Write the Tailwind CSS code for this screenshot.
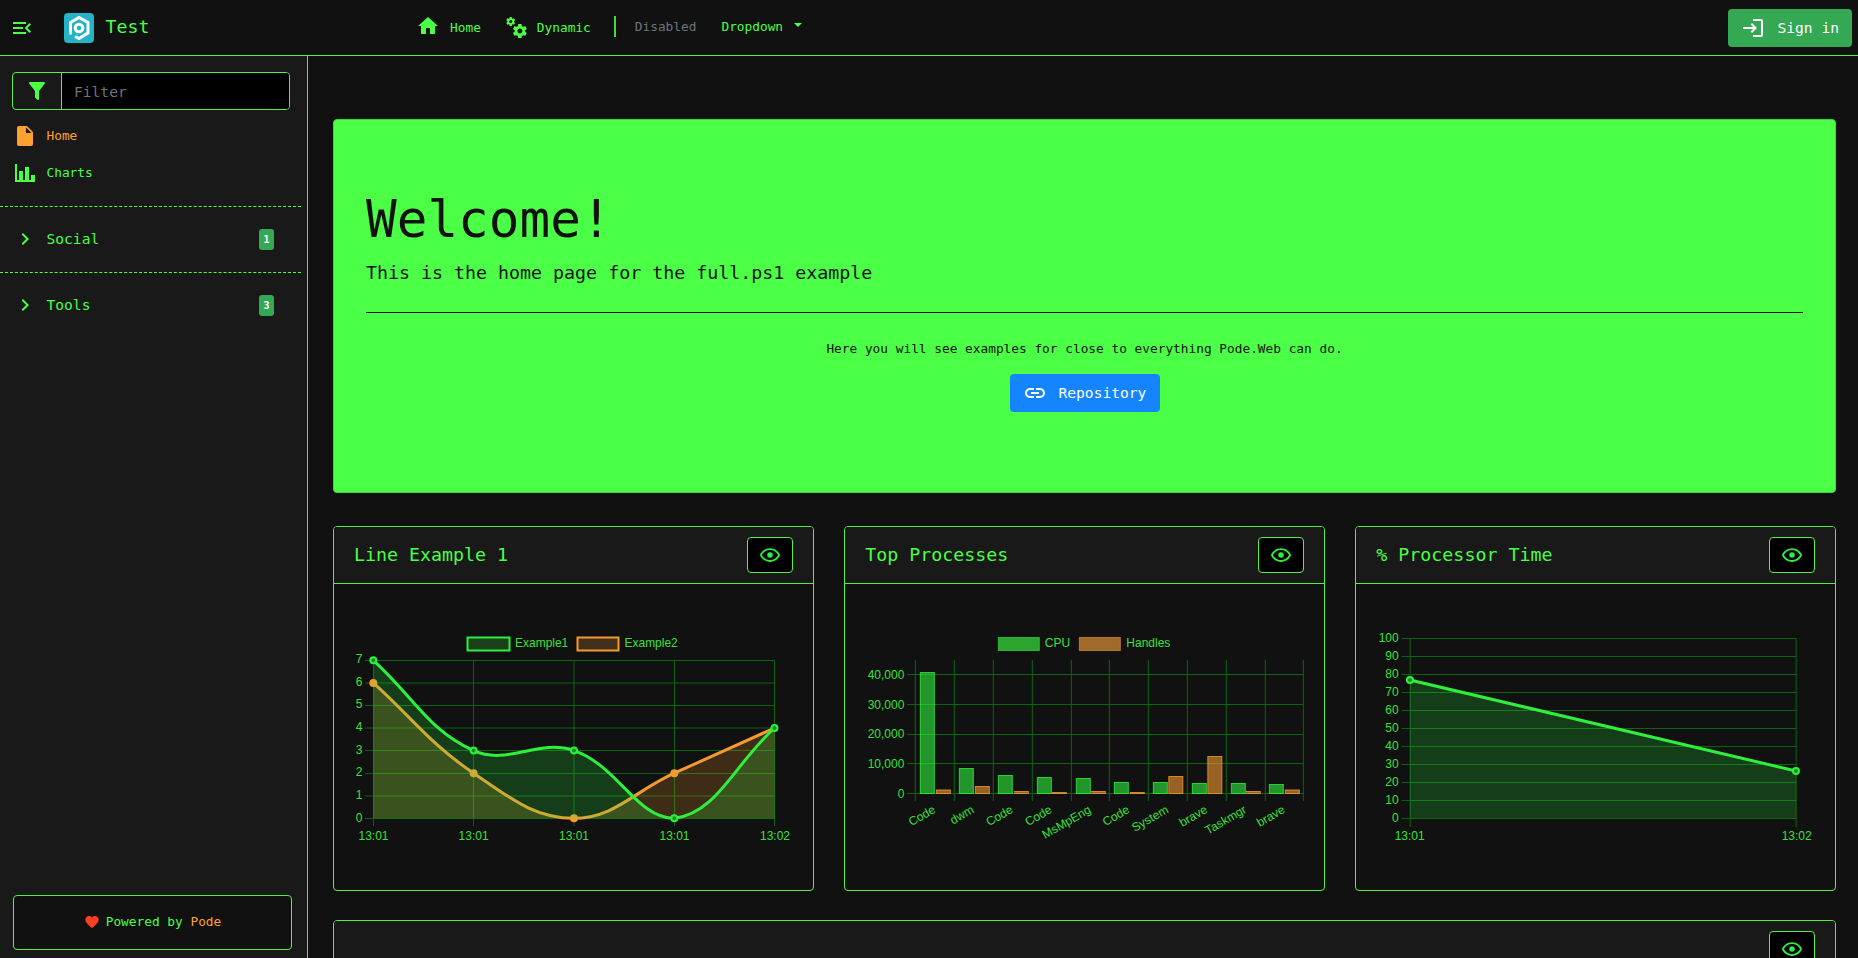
<!DOCTYPE html>
<html lang="en"><head><meta charset="utf-8"><title>Test</title>
<script src="https://cdn.jsdelivr.net/npm/@tailwindcss/browser@4"></script>
</head>
<body class="h-screen overflow-hidden bg-[#111111] text-[#4aff46] font-['DejaVu_Sans_Mono',monospace] text-[12.8px]">
<header class="h-[56px] flex items-center border-b border-[#55f045] bg-[#111111] relative">
  <svg class="w-[24px] h-[24px] ml-[10px] fill-[#4aff46]" viewBox="0 0 24 24"><path d="M21,15.61L19.59,17L14.58,12L19.59,7L21,8.39L17.44,12L21,15.61M3,6H16V8H3V6M3,13V11H13V13H3M3,18V16H16V18H3Z"/></svg>
  <svg class="w-[30px] h-[30px] ml-[30px]" viewBox="0 0 30 30"><rect width="30" height="30" rx="4" fill="#25b4c6"/><path d="M6.5 21.5 V9.5 L15 4.5 L24 9.5 V20 L15 25.5 L11 23.5" fill="none" stroke="#fff" stroke-width="3"/><circle cx="15" cy="15" r="3.8" fill="none" stroke="#fff" stroke-width="3"/></svg>
  <span class="ml-[11.5px] text-[18.3px] leading-none">Test</span>
  <nav class="flex items-center ml-[266.5px]">
    <svg class="w-[24px] h-[24px] fill-[#4aff46] -mt-[4px]" viewBox="0 0 24 24"><path d="M10,20V14H14V20H19V12H22L12,3L2,12H5V20H10Z"/></svg>
    <span class="ml-[10px]">Home</span>
    <svg class="w-[24px] h-[24px] fill-[#4aff46] ml-[23px] -mt-[2px]" viewBox="0 0 24 24"><path d="M15.9,18.45C17.25,18.45 18.35,17.35 18.35,16C18.35,14.65 17.25,13.55 15.9,13.55C14.54,13.55 13.45,14.65 13.45,16C13.45,17.35 14.54,18.45 15.9,18.45M21.1,16.68L22.58,17.84C22.71,17.95 22.75,18.13 22.66,18.29L21.26,20.71C21.17,20.86 21,20.92 20.83,20.86L19.09,20.16C18.73,20.44 18.34,20.67 17.91,20.85L17.64,22.7C17.62,22.87 17.47,23 17.3,23H14.5C14.32,23 14.18,22.87 14.15,22.7L13.89,20.85C13.46,20.67 13.07,20.44 12.71,20.16L10.97,20.86C10.81,20.92 10.62,20.86 10.54,20.71L9.14,18.29C9.05,18.13 9.09,17.95 9.22,17.84L10.7,16.68L10.65,16L10.7,15.31L9.22,14.16C9.09,14.05 9.05,13.86 9.14,13.71L10.54,11.29C10.62,11.13 10.81,11.07 10.97,11.13L12.71,11.84C13.07,11.56 13.46,11.32 13.89,11.15L14.15,9.29C14.18,9.13 14.32,9 14.5,9H17.3C17.47,9 17.62,9.13 17.64,9.29L17.91,11.15C18.34,11.32 18.73,11.56 19.09,11.84L20.83,11.13C21,11.07 21.17,11.13 21.26,11.29L22.66,13.71C22.75,13.86 22.71,14.05 22.58,14.16L21.1,15.31L21.15,16L21.1,16.68M6.69,8.07C7.56,8.07 8.26,7.37 8.26,6.5C8.26,5.63 7.56,4.92 6.69,4.92A1.58,1.58 0 0,0 5.11,6.5C5.11,7.37 5.82,8.07 6.69,8.07M10.03,6.94L11,7.68C11.07,7.75 11.09,7.87 11.03,7.97L10.13,9.53C10.08,9.63 9.96,9.67 9.86,9.63L8.74,9.18L8,9.62L7.81,10.81C7.79,10.92 7.7,11 7.59,11H5.79C5.67,11 5.58,10.92 5.56,10.81L5.4,9.62L4.64,9.18L3.5,9.63C3.41,9.67 3.3,9.63 3.24,9.53L2.34,7.97C2.28,7.87 2.31,7.75 2.39,7.68L3.34,6.94L3.31,6.5L3.34,6.06L2.39,5.32C2.31,5.25 2.28,5.13 2.34,5.03L3.24,3.47C3.3,3.37 3.41,3.33 3.5,3.37L4.63,3.82L5.4,3.38L5.56,2.19C5.58,2.08 5.67,2 5.79,2H7.59C7.7,2 7.79,2.08 7.81,2.19L8,3.38L8.74,3.82L9.86,3.37C9.96,3.33 10.08,3.37 10.13,3.47L11.03,5.03C11.09,5.13 11.07,5.25 11,5.32L10.03,6.06L10.06,6.5L10.03,6.94Z"/></svg>
    <span class="ml-[9px]">Dynamic</span>
    <span class="ml-[23px] w-[2px] h-[21px] bg-[#3fdc3c] -mt-[2px]"></span>
    <span class="ml-[19px] text-[#6c757d] -mt-[2px]">Disabled</span>
    <span class="ml-[25px] -mt-[2px]">Dropdown</span>
    <span class="ml-[11px] -mt-[5px] w-0 h-0 border-x-[4px] border-x-transparent border-t-[4.5px] border-t-[#4aff46]"></span>
  </nav>
  <button class="ml-auto mr-[6px] h-[38px] w-[124px] rounded-[4px] bg-[#34a853] text-white text-[14.6px] flex items-center pl-[13px]">
    <svg class="w-[24px] h-[24px] fill-white" viewBox="0 0 24 24"><path d="M11 7L9.6 8.4L12.2 11H2V13H12.2L9.6 15.6L11 17L16 12L11 7M20 19H12V21H20C21.1 21 22 20.1 22 19V5C22 3.9 21.1 3 20 3H12V5H20V19Z"/></svg>
    <span class="ml-[12.5px]">Sign in</span>
  </button>
</header>
<div class="flex h-[902px]">
  <aside class="w-[308px] shrink-0 bg-[#191919] border-r border-[#55f045] flex flex-col">
    <div class="mt-[16px] ml-[12px] w-[278px] h-[38px] rounded-[4px] border border-[#55f045] flex overflow-hidden">
      <span class="w-[49px] border-r border-[#55f045] flex items-center justify-center"><svg class="w-[24px] h-[24px] fill-[#4aff46]" viewBox="0 0 24 24"><path d="M14,12V19.88C14.04,20.18 13.94,20.5 13.71,20.71C13.32,21.1 12.69,21.1 12.3,20.71L10.29,18.7C10.06,18.47 9.96,18.16 10,17.87V12H9.97L4.21,4.62C3.87,4.19 3.95,3.56 4.38,3.22C4.57,3.08 4.78,3 5,3V3H19V3C19.22,3 19.43,3.08 19.62,3.22C20.05,3.56 20.13,4.19 19.79,4.62L14.03,12H14Z"/></svg></span>
      <span class="flex-1 bg-black text-[#6c757d] text-[14.6px] flex items-center pl-[12px] pt-[1px]">Filter</span>
    </div>
    <div class="h-[37px] mt-[7px] flex items-center text-[#ffa033]">
      <svg class="w-[24px] h-[24px] ml-[13px]" viewBox="0 0 24 24"><path fill="#ffa033" fill-rule="evenodd" d="M13,9V3.5L18.5,9M6,2C4.89,2 4,2.89 4,4V20A2,2 0 0,0 6,22H18A2,2 0 0,0 20,20V8L14,2H6Z"/></svg>
      <span class="ml-[9.5px]">Home</span>
    </div>
    <div class="h-[37px] flex items-center">
      <svg class="w-[24px] h-[24px] ml-[13px] fill-[#4aff46]" viewBox="0 0 24 24"><path d="M22,21H2V3H4V19H6V10H10V19H12V6H16V19H18V14H22V21Z"/></svg>
      <span class="ml-[9.5px]">Charts</span>
    </div>
    <div class="mt-[15px] mr-[6px] border-t border-dashed border-[#4aff46]"></div>
    <div class="h-[65px] flex items-center text-[14.6px]">
      <svg class="w-[24px] h-[24px] ml-[13px] fill-[#4aff46] -mt-[1px]" viewBox="0 0 24 24"><path d="M8.59,16.58L13.17,12L8.59,7.41L10,6L16,12L10,18L8.59,16.58Z"/></svg>
      <span class="ml-[9.5px] -mt-[1px]">Social</span>
      <span class="ml-auto mr-[33px] w-[15px] h-[21px] rounded-[3px] bg-[#34a853] text-white text-[10px] font-bold flex items-center justify-center">1</span>
    </div>
    <div class="mr-[6px] border-t border-dashed border-[#4aff46]"></div>
    <div class="h-[65px] flex items-center text-[14.6px]">
      <svg class="w-[24px] h-[24px] ml-[13px] fill-[#4aff46] -mt-[1px]" viewBox="0 0 24 24"><path d="M8.59,16.58L13.17,12L8.59,7.41L10,6L16,12L10,18L8.59,16.58Z"/></svg>
      <span class="ml-[9.5px] -mt-[1px]">Tools</span>
      <span class="ml-auto mr-[33px] w-[15px] h-[21px] rounded-[3px] bg-[#34a853] text-white text-[10px] font-bold flex items-center justify-center">3</span>
    </div>
    <div class="mt-auto mb-[8px] ml-[13px] w-[279px] h-[55px] rounded-[4px] border border-[#55f045] bg-[#111111] flex items-center justify-center pb-[1px]">
      <svg class="w-[16px] h-[16px] fill-[#ff3d1f] mr-[6px]" viewBox="0 0 24 24"><path d="M12,21.35L10.55,20.03C5.4,15.36 2,12.27 2,8.5C2,5.41 4.42,3 7.5,3C9.24,3 10.91,3.81 12,5.08C13.09,3.81 14.76,3 16.5,3C19.58,3 22,5.41 22,8.5C22,12.27 18.6,15.36 13.45,20.03L12,21.35Z"/></svg>
      <span>Powered by <span class="text-[#ffa033]">Pode</span></span>
    </div>
  </aside>
  <main class="flex-1 pt-[63px] pl-[25px] pr-[22px] overflow-hidden">
    <section class="h-[374px] rounded-[4px] border border-[#3ed83a] bg-[#4aff46] text-[#111111] px-[32px] pt-[66px]">
      <h1 class="text-[51px] leading-[67px]">Welcome!</h1>
      <p class="mt-[5px] text-[18.3px] leading-[30px]">This is the home page for the full.ps1 example</p>
      <hr class="mt-[24px] border-[#111111]">
      <p class="mt-[25px] leading-[21px] text-center">Here you will see examples for close to everything Pode.Web can do.</p>
      <div class="mt-[15px] flex justify-center">
        <span class="h-[38px] w-[150px] rounded-[4px] bg-[#1584ff] text-white text-[14.6px] flex items-center pl-[13px]">
          <svg class="w-[24px] h-[24px] fill-white" viewBox="0 0 24 24"><path d="M3.9,12C3.9,10.29 5.29,8.9 7,8.9H11V7H7A5,5 0 0,0 2,12A5,5 0 0,0 7,17H11V15.1H7C5.29,15.1 3.9,13.71 3.9,12M8,13H16V11H8V13M17,7H13V8.9H17C18.71,8.9 20.1,10.29 20.1,12C20.1,13.71 18.71,15.1 17,15.1H13V17H17A5,5 0 0,0 22,12A5,5 0 0,0 17,7Z"/></svg>
          <span class="ml-[12px]">Repository</span>
        </span>
      </div>
    </section>
    <div class="mt-[33px] grid grid-cols-3 gap-x-[30.5px] gap-y-[29px]">
      <!-- card 1 -->
      <article class="h-[365px] rounded-[4px] border border-[#55f045] overflow-hidden">
        <div class="h-[57px] border-b border-[#55f045] bg-[#191919] flex items-center pl-[20px] pr-[20px]">
          <h2 class="text-[18.3px]">Line Example 1</h2>
          <span class="ml-auto w-[46px] h-[36px] rounded-[4px] border border-[#55f045] bg-black flex items-center justify-center"><svg class="w-[22px] h-[22px] fill-[#2ef03c]" viewBox="0 0 24 24"><path d="M12,9A3,3 0 0,1 15,12A3,3 0 0,1 12,15A3,3 0 0,1 9,12A3,3 0 0,1 12,9M12,4.5C17,4.5 21.27,7.61 23,12C21.27,16.39 17,19.5 12,19.5C7,19.5 2.73,16.39 1,12C2.73,7.61 7,4.5 12,4.5M3.18,12C4.83,15.36 8.24,17.5 12,17.5C15.76,17.5 19.17,15.36 20.82,12C19.17,8.64 15.76,6.5 12,6.5C8.24,6.5 4.83,8.64 3.18,12Z"/></svg></span>
        </div>
        <svg class="block w-full h-[306px] font-['Liberation_Sans',sans-serif] text-[12px]" viewBox="334 584 478.67 306">
          <path d="M365 660.5H774.5M365 683H774.5M365 705.5H774.5M365 728H774.5M365 750.5H774.5M365 773.5H774.5M365 796H774.5M365 818.5H774.5M373.5 660.5V826M473.5 660.5V826M574 660.5V826M674.5 660.5V826M774.5 660.5V826" stroke="#0b660f" fill="none"/>
          <g fill="#3ae03a">
            <rect x="467.5" y="637.5" width="42" height="13" fill="#1a401c" stroke="#2ef03c" stroke-width="2"/><text x="515" y="647">Example1</text>
            <rect x="577.5" y="637.5" width="41" height="13" fill="#42301c" stroke="#f49a30" stroke-width="2"/><text x="624.5" y="647">Example2</text>
            <g text-anchor="end"><text x="362.5" y="663">7</text><text x="362.5" y="686">6</text><text x="362.5" y="708.5">5</text><text x="362.5" y="731">4</text><text x="362.5" y="754">3</text><text x="362.5" y="776.5">2</text><text x="362.5" y="799">1</text><text x="362.5" y="822">0</text></g>
            <g text-anchor="middle"><text x="373.5" y="840">13:01</text><text x="473.6" y="840">13:01</text><text x="574" y="840">13:01</text><text x="674.5" y="840">13:01</text><text x="775" y="840">13:02</text></g>
          </g>
          <path d="M373.3 682.9 C413.4 719 429.4 743.4 473.6 773.2 C509.6 797.5 533.9 818.3 574 818.3 C614.1 818.3 634.2 791.3 674.3 773.2 C714.4 755.1 734.4 746.1 774.5 728 V818.3 H373.3Z" fill="#f49a30" fill-opacity=".2"/>
          <path d="M373.3 682.9 C413.4 719 429.4 743.4 473.6 773.2 C509.6 797.5 533.9 818.3 574 818.3 C614.1 818.3 634.2 791.3 674.3 773.2 C714.4 755.1 734.4 746.1 774.5 728" fill="none" stroke="#f49a30" stroke-width="3"/>
          <g fill="#f49a30" stroke="#f49a30" stroke-width="2"><circle cx="373.3" cy="682.9" r="3"/><circle cx="473.6" cy="773.2" r="3"/><circle cx="574" cy="818.3" r="3"/><circle cx="674.3" cy="773.2" r="3"/></g>
          <path d="M373.3 660.3 C413.4 696.4 427.6 729.9 473.6 750.6 C507.9 766 537.6 738.3 574 750.6 C617.9 765.4 636.4 818.3 674.3 818.3 C716.6 813.5 734.4 764.1 774.5 728 V818.3 H373.3Z" fill="#2ef03c" fill-opacity=".2"/>
          <path d="M373.3 660.3 C413.4 696.4 427.6 729.9 473.6 750.6 C507.9 766 537.6 738.3 574 750.6 C617.9 765.4 636.4 818.3 674.3 818.3 C716.6 813.5 734.4 764.1 774.5 728" fill="none" stroke="#2ef03c" stroke-width="3"/>
          <g fill="#1f8a28" stroke="#2ef03c" stroke-width="2"><circle cx="373.3" cy="660.3" r="3"/><circle cx="473.6" cy="750.6" r="3"/><circle cx="574" cy="750.6" r="3"/><circle cx="674.3" cy="818.3" r="3"/><circle cx="774.5" cy="728" r="3"/></g>
        </svg>
      </article>
      <!-- card 2 -->
      <article class="h-[365px] rounded-[4px] border border-[#55f045] overflow-hidden">
        <div class="h-[57px] border-b border-[#55f045] bg-[#191919] flex items-center pl-[20px] pr-[20px]">
          <h2 class="text-[18.3px]">Top Processes</h2>
          <span class="ml-auto w-[46px] h-[36px] rounded-[4px] border border-[#55f045] bg-black flex items-center justify-center"><svg class="w-[22px] h-[22px] fill-[#2ef03c]" viewBox="0 0 24 24"><path d="M12,9A3,3 0 0,1 15,12A3,3 0 0,1 12,15A3,3 0 0,1 9,12A3,3 0 0,1 12,9M12,4.5C17,4.5 21.27,7.61 23,12C21.27,16.39 17,19.5 12,19.5C7,19.5 2.73,16.39 1,12C2.73,7.61 7,4.5 12,4.5M3.18,12C4.83,15.36 8.24,17.5 12,17.5C15.76,17.5 19.17,15.36 20.82,12C19.17,8.64 15.76,6.5 12,6.5C8.24,6.5 4.83,8.64 3.18,12Z"/></svg></span>
        </div>
        <svg class="block w-full h-[306px] font-['Liberation_Sans',sans-serif] text-[12px]" viewBox="845.17 584 478.67 306">
          <path d="M907.5 674.5H1303.5M907.5 704.5H1303.5M907.5 734.5H1303.5M907.5 763.5H1303.5M907.5 793.5H1303.5M915.5 660V801M954.5 660V801M993.5 660V801M1032.5 660V801M1071.5 660V801M1109.5 660V801M1148.5 660V801M1187.5 660V801M1226.5 660V801M1265.5 660V801M1303.5 660V801" stroke="#0b660f" fill="none"/>
          <g fill="#3ae03a">
            <rect x="998.5" y="637.5" width="41" height="13" fill="#2ca52f" stroke="#2ef03c" stroke-opacity=".6"/><text x="1045" y="647">CPU</text>
            <rect x="1079.5" y="637.5" width="41" height="13" fill="#a06a28" stroke="#f49a30" stroke-opacity=".6"/><text x="1126.5" y="647">Handles</text>
            <g text-anchor="end"><text x="904.5" y="678.5">40,000</text><text x="904.5" y="708.5">30,000</text><text x="904.5" y="737.5">20,000</text><text x="904.5" y="767.5">10,000</text><text x="904.5" y="797.5">0</text></g>
            <g text-anchor="end"><text transform="translate(936.5 812) rotate(-30)">Code</text><text transform="translate(975 812) rotate(-30)">dwm</text><text transform="translate(1014 812) rotate(-30)">Code</text><text transform="translate(1053 812) rotate(-30)">Code</text><text transform="translate(1092 812) rotate(-30)">MsMpEng</text><text transform="translate(1130.5 812) rotate(-30)">Code</text><text transform="translate(1169.5 812) rotate(-30)">System</text><text transform="translate(1208.5 812) rotate(-30)">brave</text><text transform="translate(1247.5 812) rotate(-30)">Taskmgr</text><text transform="translate(1286 812) rotate(-30)">brave</text></g>
          </g>
          <g fill="#2ef03c" fill-opacity=".6" stroke="#2ef03c" stroke-opacity=".8">
            <rect x="920.5" y="672.5" width="14" height="121"/><rect x="959.5" y="768.5" width="14" height="25"/><rect x="998.5" y="775.5" width="14" height="18"/><rect x="1037.5" y="777.5" width="14" height="16"/><rect x="1076.5" y="778.5" width="14" height="15"/><rect x="1114.5" y="782.5" width="14" height="11"/><rect x="1153.5" y="782.5" width="14" height="11"/><rect x="1192.5" y="783.5" width="14" height="10"/><rect x="1231.5" y="783.5" width="14" height="10"/><rect x="1269.5" y="784.5" width="14" height="9"/>
          </g>
          <g fill="#f49a30" fill-opacity=".6" stroke="#f49a30" stroke-opacity=".8">
            <rect x="936.5" y="790" width="14" height="3.5"/><rect x="975.5" y="786.5" width="14" height="7"/><rect x="1014.5" y="791.5" width="14" height="2"/><rect x="1052.5" y="792.5" width="14" height="1"/><rect x="1091.5" y="791.5" width="14" height="2"/><rect x="1130.5" y="792.5" width="14" height="1"/><rect x="1169" y="776.5" width="14" height="17"/><rect x="1208" y="756.5" width="14" height="37"/><rect x="1246.5" y="791.5" width="14" height="2"/><rect x="1285.5" y="790" width="14" height="3.5"/>
          </g>
        </svg>
      </article>
      <!-- card 3 -->
      <article class="h-[365px] rounded-[4px] border border-[#55f045] overflow-hidden">
        <div class="h-[57px] border-b border-[#55f045] bg-[#191919] flex items-center pl-[20px] pr-[20px]">
          <h2 class="text-[18.3px]">% Processor Time</h2>
          <span class="ml-auto w-[46px] h-[36px] rounded-[4px] border border-[#55f045] bg-black flex items-center justify-center"><svg class="w-[22px] h-[22px] fill-[#2ef03c]" viewBox="0 0 24 24"><path d="M12,9A3,3 0 0,1 15,12A3,3 0 0,1 12,15A3,3 0 0,1 9,12A3,3 0 0,1 12,9M12,4.5C17,4.5 21.27,7.61 23,12C21.27,16.39 17,19.5 12,19.5C7,19.5 2.73,16.39 1,12C2.73,7.61 7,4.5 12,4.5M3.18,12C4.83,15.36 8.24,17.5 12,17.5C15.76,17.5 19.17,15.36 20.82,12C19.17,8.64 15.76,6.5 12,6.5C8.24,6.5 4.83,8.64 3.18,12Z"/></svg></span>
        </div>
        <svg class="block w-full h-[306px] font-['Liberation_Sans',sans-serif] text-[12px]" viewBox="1356.33 584 478.67 306">
          <path d="M1402 638.5H1796.5M1402 656.5H1796.5M1402 674.5H1796.5M1402 692.5H1796.5M1402 710.5H1796.5M1402 728.5H1796.5M1402 746.5H1796.5M1402 764.5H1796.5M1402 782.5H1796.5M1402 800.5H1796.5M1402 818.5H1796.5M1410.5 638.5V827M1796.5 638.5V827" stroke="#0b660f" fill="none"/>
          <g fill="#3ae03a">
            <g text-anchor="end"><text x="1399" y="642.5">100</text><text x="1399" y="660.5">90</text><text x="1399" y="678.5">80</text><text x="1399" y="696.5">70</text><text x="1399" y="714.5">60</text><text x="1399" y="732.5">50</text><text x="1399" y="750.5">40</text><text x="1399" y="768.5">30</text><text x="1399" y="786.5">20</text><text x="1399" y="804.5">10</text><text x="1399" y="822.5">0</text></g>
            <g text-anchor="middle"><text x="1410" y="840">13:01</text><text x="1797" y="840">13:02</text></g>
          </g>
          <path d="M1410.3 680L1796.3 771V818.3H1410.3Z" fill="#2ef03c" fill-opacity=".2"/>
          <path d="M1410.3 680L1796.3 771" fill="none" stroke="#2ef03c" stroke-width="3"/>
          <g fill="#1f8a28" stroke="#2ef03c" stroke-width="2"><circle cx="1410.3" cy="680" r="3"/><circle cx="1796.3" cy="771" r="3"/></g>
        </svg>
      </article>
      <!-- card 4 -->
      <article class="col-span-3 h-[365px] rounded-[4px] border border-[#55f045] overflow-hidden">
        <div class="h-[57px] border-b border-[#55f045] bg-[#191919] flex items-center pl-[20px] pr-[20px]">
          <span class="ml-auto w-[46px] h-[36px] rounded-[4px] border border-[#55f045] bg-black flex items-center justify-center"><svg class="w-[22px] h-[22px] fill-[#2ef03c]" viewBox="0 0 24 24"><path d="M12,9A3,3 0 0,1 15,12A3,3 0 0,1 12,15A3,3 0 0,1 9,12A3,3 0 0,1 12,9M12,4.5C17,4.5 21.27,7.61 23,12C21.27,16.39 17,19.5 12,19.5C7,19.5 2.73,16.39 1,12C2.73,7.61 7,4.5 12,4.5M3.18,12C4.83,15.36 8.24,17.5 12,17.5C15.76,17.5 19.17,15.36 20.82,12C19.17,8.64 15.76,6.5 12,6.5C8.24,6.5 4.83,8.64 3.18,12Z"/></svg></span>
        </div>
      </article>
    </div>
  </main>
</div>
</body></html>
